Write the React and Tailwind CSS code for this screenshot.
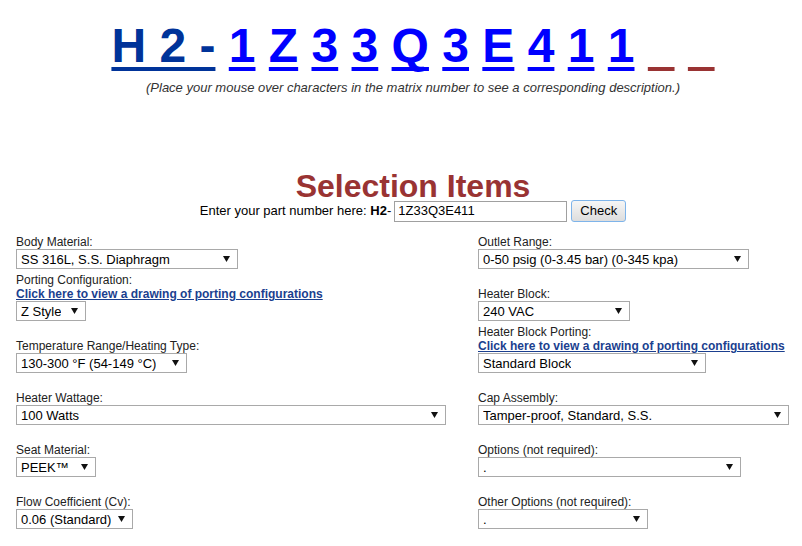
import React from "react";

const Caret = () => (
  <svg width="7" height="6" viewBox="0 0 7 6" className="shrink-0">
    <polygon points="0,0 7,0 3.5,6" fill="#111" />
  </svg>
);

const Dropdown = ({ value, width }) => (
  <div
    className="flex h-[20px] items-center justify-between border border-[#a9a9a9] bg-white pl-[4px] pr-[7px] text-[13px] leading-[15px] text-black"
    style={{ width }}
  >
    <span className="truncate">{value}</span>
    <Caret />
  </div>
);

const Field = ({ label, value, width, link }) => (
  <div className="flex flex-col justify-end">
    <div className="text-[12px] leading-[14px] text-[#222]">{label}</div>
    {link && (
      <a href="#" className="text-[12px] font-bold leading-[14px] text-[#1b3f8f] underline">
        Click here to view a drawing of porting configurations
      </a>
    )}
    <Dropdown value={value} width={width} />
  </div>
);

const leftFields = [
  { label: "Body Material:", value: "SS 316L, S.S. Diaphragm", width: 222 },
  { label: "Porting Configuration:", value: "Z Style", width: 70, link: true },
  { label: "Temperature Range/Heating Type:", value: "130-300 °F (54-149 °C)", width: 171 },
  { label: "Heater Wattage:", value: "100 Watts", width: 430 },
  { label: "Seat Material:", value: "PEEK™", width: 80 },
  { label: "Flow Coefficient (Cv):", value: "0.06 (Standard)", width: 117 },
];

const rightFields = [
  { label: "Outlet Range:", value: "0-50 psig (0-3.45 bar) (0-345 kpa)", width: 271 },
  { label: "Heater Block:", value: "240 VAC", width: 152 },
  { label: "Heater Block Porting:", value: "Standard Block", width: 228, link: true },
  { label: "Cap Assembly:", value: "Tamper-proof, Standard, S.S.", width: 311 },
  { label: "Options (not required):", value: ".", width: 263 },
  { label: "Other Options (not required):", value: ".", width: 170 },
];

const matrix = ["1", "Z", "3", "3", "Q", "3", "E", "4", "1", "1"];

// thick underline shared by every character of the matrix number
const bar = "underline decoration-[4px] underline-offset-[5px] [text-decoration-skip-ink:none]";

export default function App() {
  return (
    <div className="h-[546px] w-[802px] overflow-hidden bg-white font-['Liberation_Sans',Arial,sans-serif] text-[#222]">
      <div className="pl-[24px] pt-[19px] text-center">
        <div className="text-[48px] font-bold leading-[54px]">
          <a href="#" className={`whitespace-pre text-[#003399] ${bar}`}>H 2 -</a>{" "}
          {matrix.map((c, i) => (
            <React.Fragment key={i}>
              <a href="#" className={`text-[#0000ff] ${bar}`}>{c}</a>{" "}
            </React.Fragment>
          ))}
          <span className={`text-transparent decoration-[#993333] ${bar}`}>_</span>{" "}
          <span className={`text-transparent decoration-[#993333] ${bar}`}>_</span>
        </div>
        <div className="mt-[7px] text-[13px] italic leading-[15px] text-[#333]">
          (Place your mouse over characters in the matrix number to see a corresponding description.)
        </div>

        <h1 className="mt-[77px] text-[32px] font-bold leading-[28px] text-[#993333]">Selection Items</h1>

        <div className="flex h-[22px] items-center justify-center text-[13px] text-black">
          <span>Enter your part number here:&nbsp;</span>
          <b>H2</b>
          <span>-</span>
          <div className="ml-[3px] flex h-[21px] w-[173px] items-center border border-[#a0a0a0] px-[3px] text-left">
            1Z33Q3E411
          </div>
          <button className="ml-[4px] h-[22px] w-[55px] rounded-[3px] border border-[#7eb4ea] bg-gradient-to-b from-[#f6f6f6] to-[#dddddd] text-[13px] text-black">
            Check
          </button>
        </div>
      </div>

      <div className="grid grid-cols-[462px_1fr] grid-rows-[47px_52px_52px_52px_52px_52px] pl-[16px]">
        {leftFields.map((f, i) => (
          <React.Fragment key={i}>
            <Field {...f} />
            <Field {...rightFields[i]} />
          </React.Fragment>
        ))}
      </div>
    </div>
  );
}
